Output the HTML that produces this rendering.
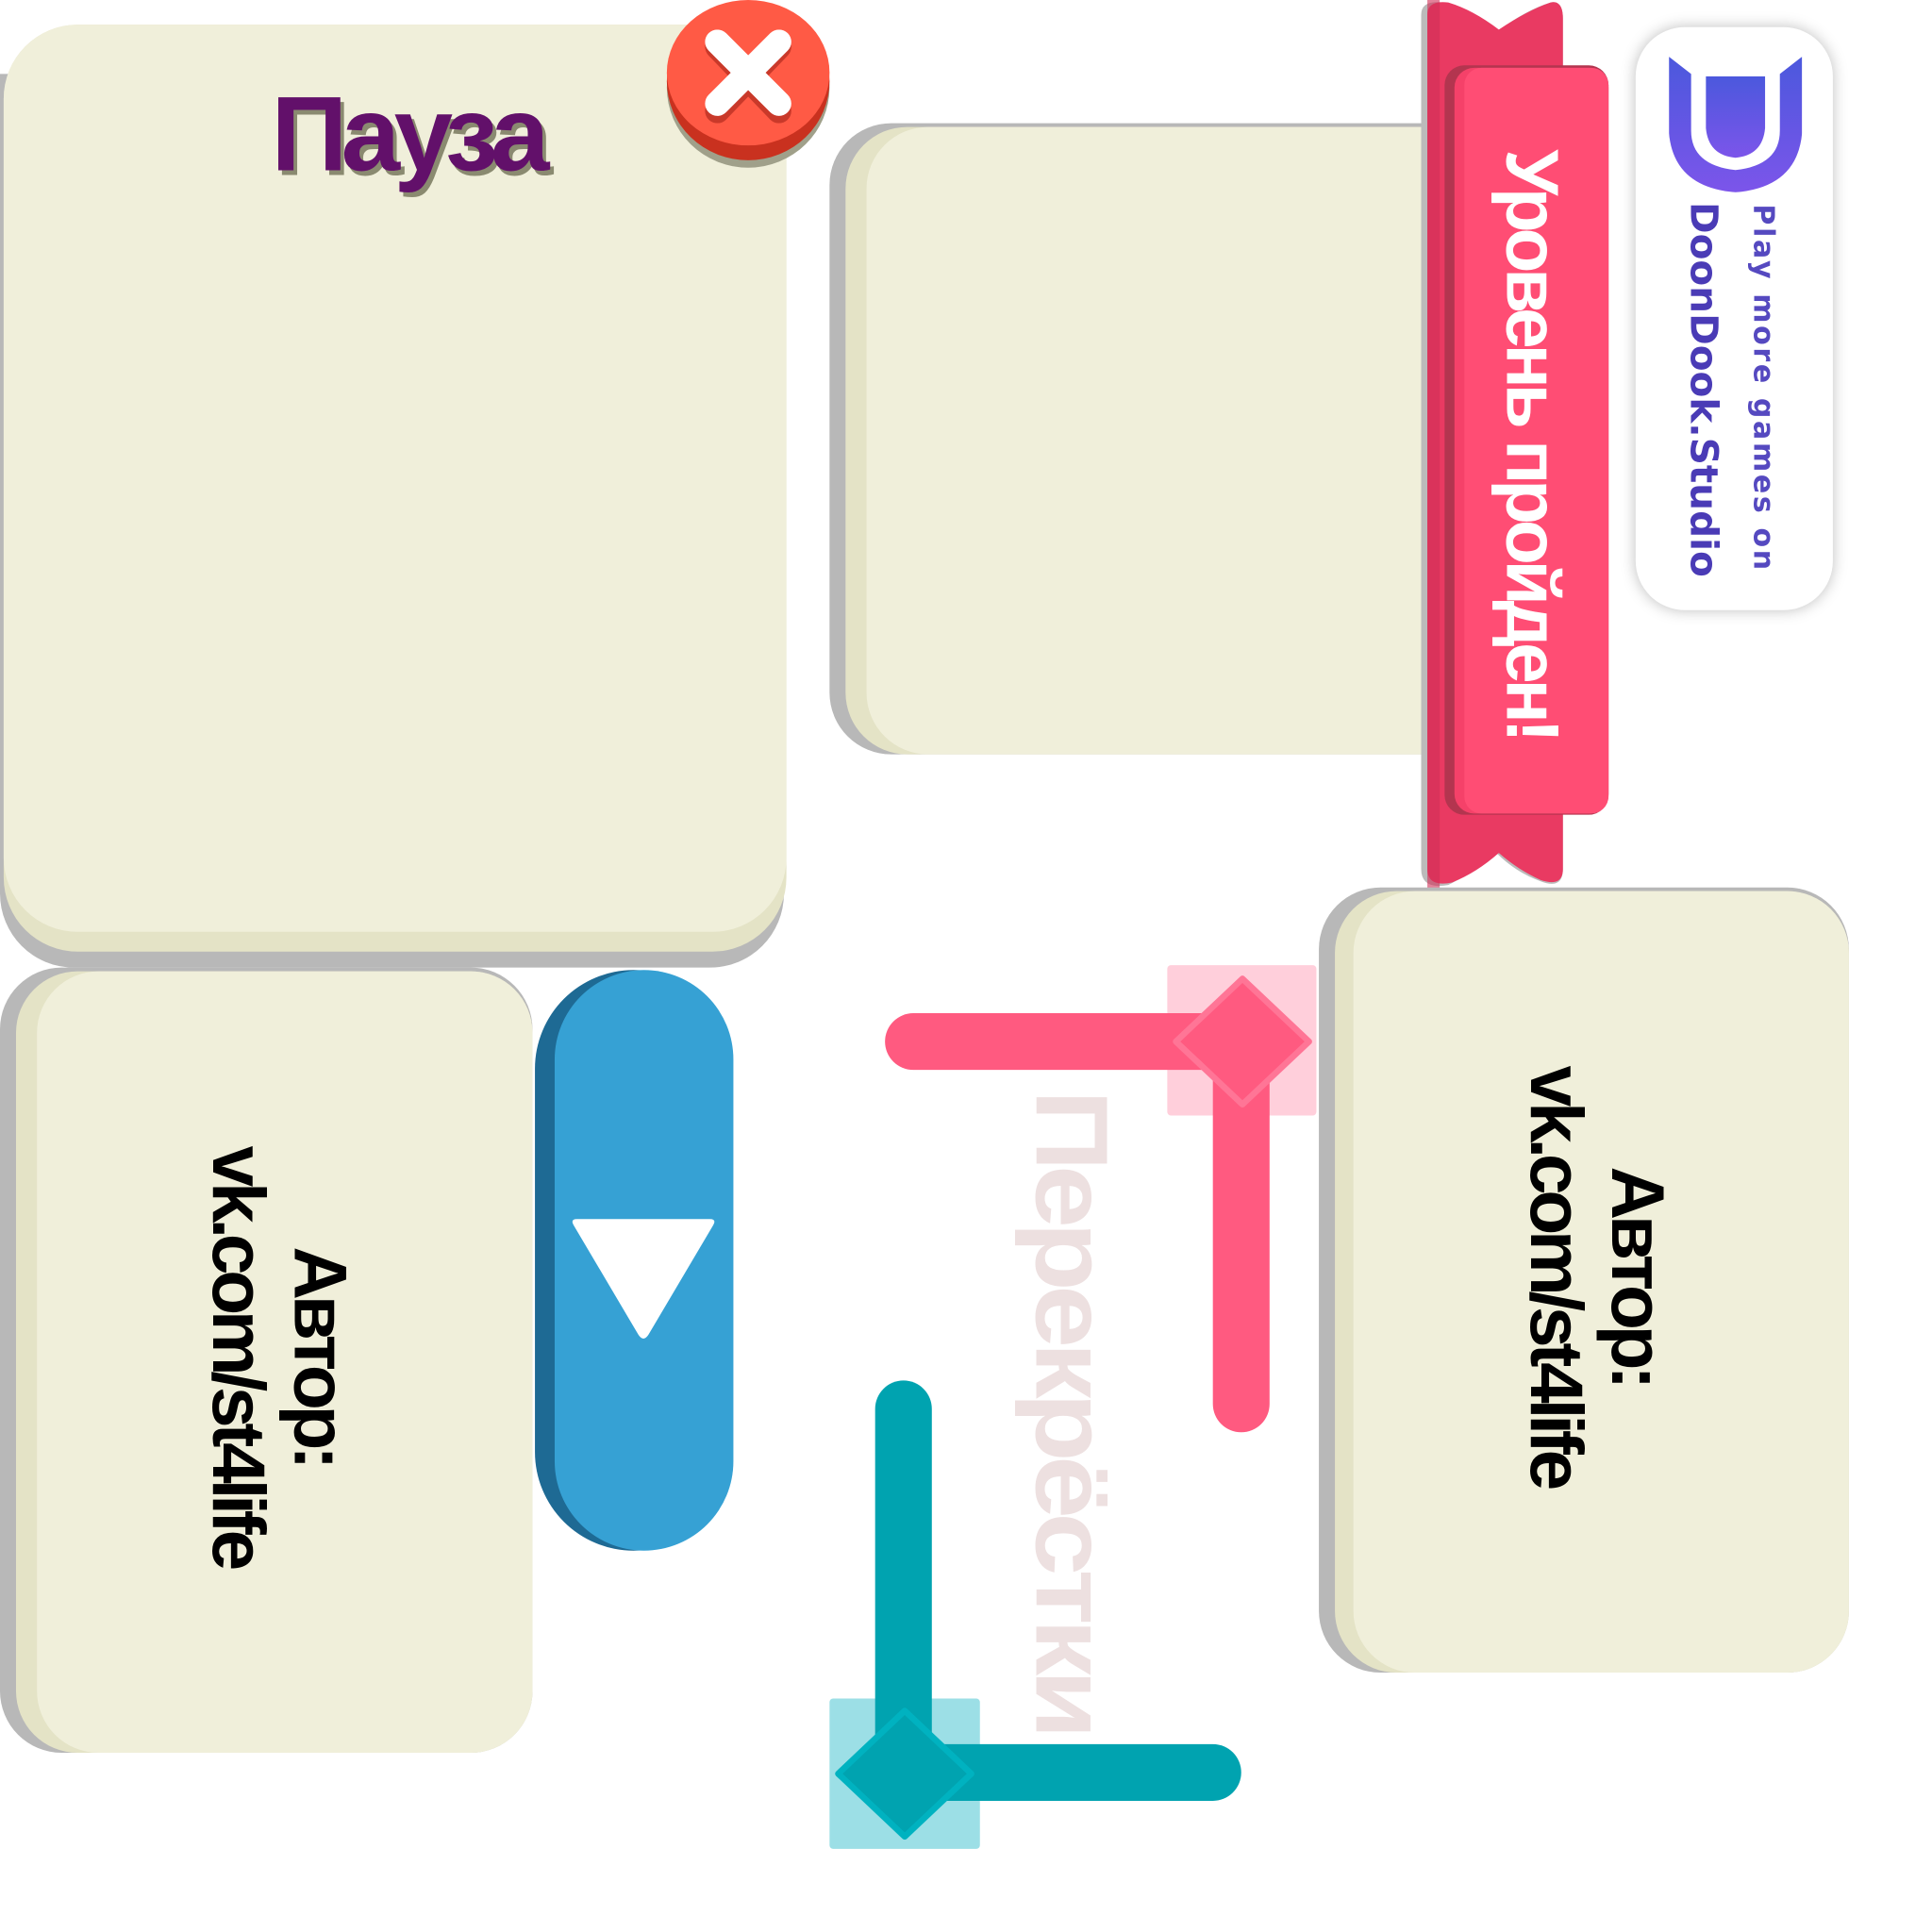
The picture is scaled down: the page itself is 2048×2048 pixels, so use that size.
<!DOCTYPE html>
<html><head><meta charset="utf-8"><style>
html,body{margin:0;padding:0;background:#fff;overflow:hidden}
body{width:2048px;height:2048px;position:relative}
#s{position:absolute;left:0;top:0;width:1550px;height:1550px;transform:scale(1.3066);transform-origin:0 0;font-family:"Liberation Sans","DejaVu Sans",sans-serif}
.a{position:absolute}
.rot{position:absolute;transform:translate(-50%,-50%) rotate(90deg);white-space:nowrap;text-align:center;font-weight:bold}
</style></head><body><div id="s">
<div class="a" style="left:0;top:60px;width:636px;height:725px;background:#b8b8b8;border-radius:0 0 60px 60px"></div>
<div class="a" style="left:3px;top:20px;width:635px;height:752px;background:#e4e3c6;border-radius:60px 0 60px 60px"></div>
<div class="a" style="left:3px;top:20px;width:635px;height:736px;background:#f0efda;border-radius:60px 0 60px 60px"></div>
<div class="a" style="left:220px;top:60px;font:bold 86px 'Liberation Sans',sans-serif;color:#62106a;letter-spacing:-5px;text-shadow:3px 4px 0 #8a8a70">Пауза</div>
<div class="a" style="left:541px;top:6px;width:132px;height:130px;border-radius:50%;background:#a0a08a"></div>
<div class="a" style="left:541px;top:2px;width:132px;height:128px;border-radius:50%;background:#c9311f"></div>
<div class="a" style="left:541px;top:0;width:132px;height:118px;border-radius:50%;background:#ff5a45"></div>
<svg class="a" style="left:566px;top:24px" width="82" height="76" viewBox="0 0 82 76"><path d="M16 14 L66 66 M66 14 L16 66" stroke="#c9392a" stroke-width="20" stroke-linecap="round"/><path d="M16 10 L66 60 M66 10 L16 60" stroke="#fff" stroke-width="20" stroke-linecap="round"/></svg>
<div class="a" style="left:673px;top:100px;width:510px;height:512px;background:#b8b8b8;border-radius:50px 0 0 50px"></div>
<div class="a" style="left:686px;top:103px;width:497px;height:509px;background:#e4e3c6;border-radius:50px 0 0 50px"></div>
<div class="a" style="left:703px;top:103px;width:480px;height:509px;background:#f0efda;border-radius:50px 0 0 50px"></div>
<svg class="a" style="left:1150px;top:0" width="125" height="722" viewBox="0 0 125 722"><path d="M3 12 Q3 0 20 2 Q40 8 64 26 Q88 8 108 2 Q118 0 118 15 L118 705 Q118 722 100 715 Q80 708 64 692 Q45 708 25 718 Q3 722 3 705Z" fill="#bbb"/><path d="M8 12 Q8 0 25 2 Q45 8 66 24 Q90 8 108 2 Q118 0 118 15 L118 705 Q118 720 100 714 Q82 706 66 692 Q48 708 28 716 Q8 720 8 705Z" fill="#e93a62"/><rect x="8" y="0" width="10" height="722" fill="#d02f57" opacity=".6"/></svg>
<div class="a" style="left:1172px;top:53px;width:133px;height:608px;background:#b3354f;border-radius:16px"></div>
<div class="a" style="left:1180px;top:55px;width:125px;height:605px;background:#f54169;border-radius:16px"></div>
<div class="a" style="left:1188px;top:55px;width:117px;height:605px;background:#ff4d74;border-radius:14px"></div>
<div class="rot" style="left:1243px;top:360px;font-size:60px;color:#fff;letter-spacing:-4px">Уровень пройден!</div>
<div class="a" style="left:1327px;top:22px;width:160px;height:473px;background:#fff;border-radius:40px;box-shadow:0 0 12px rgba(0,0,0,.25)"></div>
<svg class="a" style="left:1354px;top:46px" width="108" height="110" viewBox="0 0 108 110"><defs><linearGradient id="g" x1="0" y1="0" x2="0" y2="1"><stop offset="0" stop-color="#4b58dd"/><stop offset="1" stop-color="#7c55ea"/></linearGradient></defs><path d="M0 0 L18 14 L18 60 Q18 88 54 92 Q90 88 90 60 L90 14 L108 0 L108 62 Q104 106 54 110 Q4 106 0 62Z" fill="url(#g)"/><path d="M30 16 L78 16 L78 58 Q76 80 54 82 Q32 80 30 58Z" fill="url(#g)"/></svg>
<div class="rot" style="left:1430px;top:315px;font-size:23px;color:#5549c0;letter-spacing:2px;font-family:'DejaVu Sans',sans-serif">Play more games on</div>
<div class="rot" style="left:1382px;top:316px;font-size:31px;color:#4a3bb6;font-family:'DejaVu Sans',sans-serif">DoonDook.Studio</div>
<div class="a" style="left:0;top:785px;width:432px;height:637px;background:#b8b8b8;border-radius:50px"></div>
<div class="a" style="left:13px;top:788px;width:419px;height:634px;background:#e4e3c6;border-radius:50px"></div>
<div class="a" style="left:30px;top:788px;width:402px;height:634px;background:#f0efda;border-radius:50px"></div>
<div class="rot" style="left:226px;top:1100px;font-size:60px;color:#000;line-height:66px;letter-spacing:-4px">Автор:<br>vk.com/st4life</div>
<div class="a" style="left:434px;top:787px;width:160px;height:471px;background:#1e6a94;border-radius:80px"></div>
<div class="a" style="left:450px;top:787px;width:145px;height:471px;background:#36a1d4;border-radius:74px"></div>
<svg class="a" style="left:458px;top:985px" width="128" height="108" viewBox="0 0 128 108"><path d="M10 4 L118 4 Q124 4 120 10 L68 98 Q64 104 60 98 L8 10 Q4 4 10 4Z" fill="#fff"/></svg>
<div class="a" style="left:947px;top:783px;width:121px;height:122px;background:#ffcfdb;border-radius:3px"></div>
<div class="a" style="left:718px;top:822px;width:310px;height:46px;background:#ff5a80;border-radius:23px"></div>
<div class="a" style="left:984px;top:845px;width:46px;height:317px;background:#ff5a80;border-radius:23px"></div>
<svg class="a" style="left:948px;top:790px" width="120" height="110" viewBox="0 0 120 110"><path d="M60 4 L114 55 L60 106 L6 55Z" fill="#ff5a80" stroke="#ff7596" stroke-width="5" stroke-linejoin="round"/></svg>
<div class="a" style="left:673px;top:1378px;width:122px;height:122px;background:#9cdfe6;border-radius:3px"></div>
<div class="a" style="left:710px;top:1120px;width:46px;height:340px;background:#00a3b0;border-radius:23px"></div>
<div class="a" style="left:733px;top:1415px;width:274px;height:46px;background:#00a3b0;border-radius:23px"></div>
<svg class="a" style="left:674px;top:1384px" width="120" height="110" viewBox="0 0 120 110"><path d="M60 4 L114 55 L60 106 L6 55Z" fill="#00a3b0" stroke="#00b2c0" stroke-width="5" stroke-linejoin="round"/></svg>
<div class="rot" style="left:868px;top:1145px;font-size:92px;color:#ede0e0;letter-spacing:-5px;transform:translate(-50%,-50%) rotate(90deg) scaleY(0.9)">Перекрёстки</div>
<div class="a" style="left:1070px;top:720px;width:430px;height:637px;background:#b8b8b8;border-radius:50px"></div>
<div class="a" style="left:1083px;top:723px;width:417px;height:634px;background:#e4e3c6;border-radius:50px"></div>
<div class="a" style="left:1098px;top:723px;width:402px;height:634px;background:#f0efda;border-radius:50px"></div>
<div class="rot" style="left:1295px;top:1035px;font-size:60px;color:#000;line-height:66px;letter-spacing:-4px">Автор:<br>vk.com/st4life</div>
</div></body></html>
